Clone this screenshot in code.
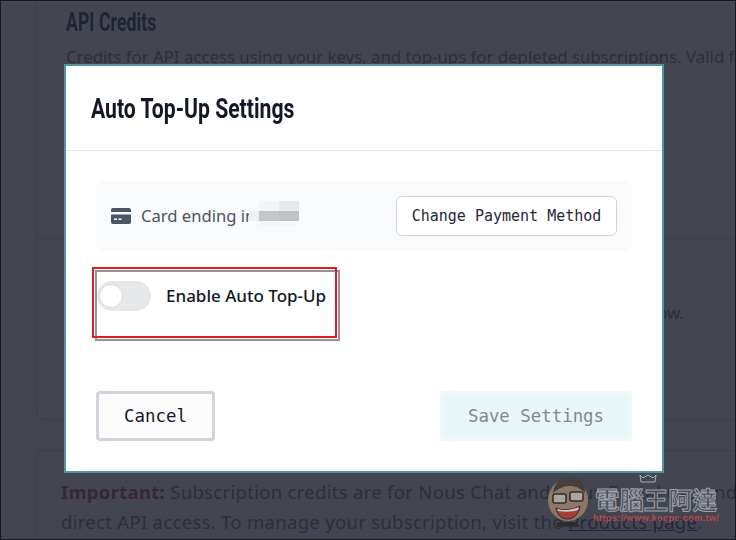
<div class="page">
  <section class="card credits">
    <h2 class="bg-title">API Credits</h2>
    <p class="bg-text nowrap">Credits for API access using your keys, and top-ups for depleted subscriptions. Valid for one year from purchase.</p>
    <hr class="rule" />
    <p class="bg-text below">Purchase additional credits with your card or configure automatic top-up below.</p>
  </section>
  <section class="card notice">
    <p class="notice-text"><strong>Important:</strong> Subscription credits are for Nous Chat and Nous Portal use and do not apply to<br />direct API access. To manage your subscription, visit the <a href="#products">Products page</a>.</p>
  </section>

  <div class="modal">
    <header class="modal-head"><h1>Auto Top-Up Settings</h1></header>
    <div class="modal-body">
      <div class="payment">
        <div class="card-label">
          <svg class="card-icon" viewBox="0 0 20 16" width="20" height="16" aria-hidden="true">
            <path fill="#4b5563" d="M2 0h16a2 2 0 0 1 2 2v2H0V2a2 2 0 0 1 2-2zM0 6.5h20V14a2 2 0 0 1-2 2H2a2 2 0 0 1-2-2zM3 10.5v1.6h3v-1.6zM7.5 10.5v1.6h3v-1.6z" fill-rule="evenodd"/>
          </svg>
          <span class="label-text">Card ending in</span>
          <span class="blur"><i></i><i></i><i></i></span>
        </div>
        <button class="btn change">Change Payment Method</button>
      </div>
      <div class="toggle-row">
        <span class="toggle"><span class="knob"></span></span>
        <span class="toggle-label">Enable Auto Top-Up</span>
      </div>
      <div class="actions">
        <button class="btn cancel">Cancel</button>
        <button class="btn save">Save Settings</button>
      </div>
    </div>
  </div>

  <div class="annotation"></div>

  <div class="watermark">
    <svg viewBox="0 0 44 52" width="44" height="52" aria-hidden="true">
      <ellipse cx="22" cy="25" rx="20" ry="21" fill="#8f7766"/>
      <path d="M7 18C8 6 18 1 26 2c8 1 14 8 13 16-6-6-10-7-16-7S12 14 7 18z" fill="#45403f"/>
      <rect x="7" y="19" width="13" height="9" rx="2" fill="#a9a6a4" stroke="#2f2c30" stroke-width="1.5"/>
      <rect x="24" y="17" width="13" height="9" rx="2" fill="#a9a6a4" stroke="#2f2c30" stroke-width="1.5"/>
      <path d="M10 33c6 3 17 2 24-2-1 8-6 13-13 13s-10-6-11-11z" fill="#a63f3a" stroke="#2f2c30"/>
      <path d="M11 34c6 2 15 1 22-2l-1 3c-6 2-13 2-20 1z" fill="#cfcac6"/>
      <path d="M13 47h18l3 5H10z" fill="#2f2c30"/>
    </svg>
    <div class="mark-text">
      <svg class="crown" viewBox="0 0 20 10" width="20" height="10" aria-hidden="true"><path d="M2 2l3 3 5-3 5 3 3-3-1 7H3z" fill="none" stroke="#a8acb3" stroke-width="1"/></svg>
      <div class="mark-cn">電腦王阿達</div>
      <div class="mark-url">https://www.kocpc.com.tw/</div>
    </div>
  </div>
</div>

<style>
  :global(body) { margin: 0; background: #434651; }
  .page {
    position: relative;
    box-sizing: border-box;
    width: 736px;
    height: 540px;
    overflow: hidden;
    background: #434651;
    border: 1px solid #17181c;
    font-family: "Noto Sans", "Open Sans", sans-serif;
    color: #2c2f3c;
  }
  .card { box-sizing: border-box; margin-left: 35px; border: 1px solid #3c3f4a; }
  .credits {
    height: 420px;
    margin-top: -1px;
    padding: 0 0 0 29px;
    border-right: 0;
    border-top: 0;
    border-radius: 0 0 0 8px;
  }
  .bg-title {
    margin: 0;
    padding-top: 8px;
    font: 700 25px/30px Roboto, sans-serif;
    transform: scaleX(0.71);
    transform-origin: left center;
    color: #1f2433;
  }
  .bg-text { margin: 0; font-size: 16.8px; line-height: 30px; white-space: nowrap; }
  .nowrap { padding-top: 4px; }
  .rule { margin: 166px 0 0 -29px; border: 0; border-top: 1px solid #3c3f4a; }
  .below { margin-top: 59px; letter-spacing: -0.13px; }
  .notice {
    margin-top: 30px;
    height: 100px;
    padding: 26px 0 0 24px;
    border-right: 0;
    border-radius: 8px 0 0 0;
  }
  .notice-text { margin: 0; font-size: 18.5px; letter-spacing: 0.3px; line-height: 30px; white-space: nowrap; }
  .notice-text strong { color: #3a2536; }
  .notice-text a { color: #232838; text-decoration: underline; }

  .modal {
    position: absolute;
    left: 63px;
    top: 63px;
    box-sizing: border-box;
    width: 600px;
    height: 409px;
    background: #fff;
    border: 2px solid #4f96a2;
    color: #111827;
  }
  .modal-head {
    box-sizing: border-box;
    height: 85px;
    padding: 2px 0 0 25px;
    display: flex;
    align-items: center;
    border-bottom: 1px solid #e5e7eb;
  }
  .modal-head h1 {
    margin: 0;
    font: 700 28px/1.2 Roboto, sans-serif;
    transform: scaleX(0.756);
    transform-origin: left center;
    white-space: nowrap;
    color: #111827;
  }
  .modal-body { padding: 30px 30px 0; }
  .payment {
    box-sizing: border-box;
    height: 70px;
    padding: 0 15px;
    display: flex;
    align-items: center;
    justify-content: space-between;
    background: #f9fafb;
    border-radius: 8px;
  }
  .card-label { display: flex; align-items: center; color: #4b5563; font-size: 16.6px; position: relative; }
  .label-text { padding-bottom: 2px; }
  .card-icon { margin-right: 10px; }
  .blur {
    position: absolute;
    left: 138px;
    top: 50%;
    margin-top: -15px;
    height: 25px;
    display: grid;
    grid-template-columns: 10px 20px 20px;
  }
  .blur i:nth-child(1) { background: linear-gradient(#f9fafb 10px, #eff0f1 10px, #eff0f1 20px, #f9fafb 20px); }
  .blur i:nth-child(2) { background: linear-gradient(#f3f4f5 10px, #c5c6cb 10px, #c5c6cb 20px, #f5f6f7 20px); }
  .blur i:nth-child(3) { background: linear-gradient(#e8e9ec 10px, #c0c1c7 10px, #c0c1c7 20px, #f5f6f7 20px); }
  .btn {
    box-sizing: border-box;
    font-family: "DejaVu Sans Mono", "Liberation Mono", monospace;
    background: #fff;
    cursor: pointer;
  }
  .change {
    width: 221px;
    height: 40px;
    border: 1px solid #d1d5db;
    border-radius: 6px;
    font-size: 15px;
    color: #1f2937;
    padding: 0;
  }
  .toggle-row { display: flex; align-items: center; margin-top: 30px; height: 30px; padding-left: 1px; }
  .toggle {
    display: flex;
    align-items: center;
    box-sizing: border-box;
    width: 54px;
    height: 30px;
    padding-left: 2px;
    border-radius: 15px;
    background: #e5e7eb;
  }
  .knob { width: 24px; height: 24px; background: #fff; border-radius: 50%; border: 1px solid #d8dade; box-sizing: border-box; }
  .toggle-label { margin-left: 15px; padding-bottom: 2px; font-size: 17px; font-weight: 500; color: #111827; }
  .actions { display: flex; justify-content: space-between; margin-top: 80px; }
  .cancel {
    width: 119px;
    height: 50px;
    background: #fcfcfd;
    border: 3px solid #d1d5db;
    border-radius: 4px;
    font-size: 17.4px;
    color: #111827;
    padding: 0;
  }
  .save {
    width: 192px;
    height: 50px;
    background: #e6f6f9;
    border: 3px solid #edf7f9;
    border-radius: 4px;
    font-size: 17.4px;
    color: #7f8a8e;
    padding: 0;
  }

  .annotation {
    position: absolute;
    left: 91px;
    top: 266px;
    box-sizing: border-box;
    width: 245px;
    height: 71px;
    border: 2px solid #e01b22;
    filter: drop-shadow(3px 3px 0.5px rgba(70, 60, 60, 0.55));
  }

  .watermark {
    position: absolute;
    left: 545px;
    top: 474px;
    display: flex;
    gap: 3px;
  }
  .mark-text { position: relative; padding-top: 10px; }
  .crown { position: absolute; left: 45px; top: -2px; }
  .mark-cn {
    font: 700 24.4px/28px "Noto Sans CJK TC", sans-serif;
    color: #4b4e59;
    -webkit-text-stroke: 1px #9da1a9;
    white-space: nowrap;
    padding-left: 2px;
  }
  .mark-url {
    font: 700 9px/10px "Liberation Sans", sans-serif;
    color: #b3494c;
    letter-spacing: 0.45px;
    white-space: nowrap;
  }
</style>
